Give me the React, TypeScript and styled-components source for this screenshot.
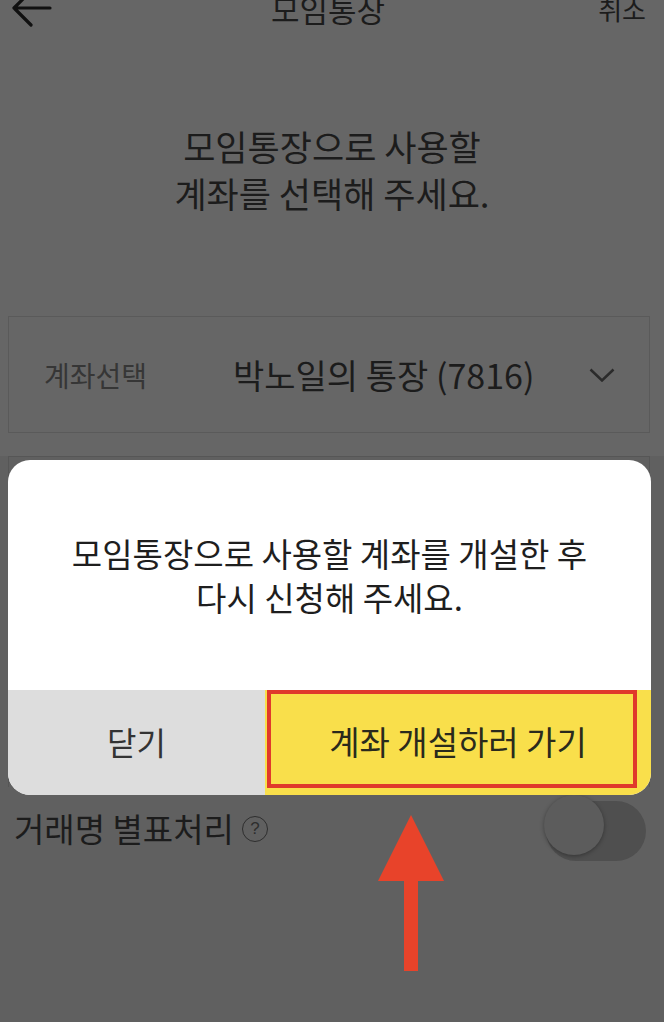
import React from "react";
import styled, { createGlobalStyle } from "styled-components";

const GlobalStyle = createGlobalStyle`
  html, body {
    margin: 0;
    padding: 0;
  }
  body {
    font-family: "Noto Sans CJK KR", "Noto Sans", sans-serif;
    background: #606060;
  }
`;

const Screen = styled.div`
  position: relative;
  width: 664px;
  height: 1022px;
  overflow: hidden;
  background: #666666;
  display: flex;
  flex-direction: column;
`;

const Header = styled.header`
  height: 56px;
  margin-top: -20px;
  display: grid;
  grid-template-columns: 80px 1fr 80px;
  align-items: center;
  padding: 0 18px 0 10px;
  color: #1c1c1c;
`;

const Title = styled.h1`
  margin: 0;
  text-align: center;
  font-size: 31px;
  font-weight: 400;
`;

const HeaderAction = styled.span`
  justify-self: end;
  font-size: 26px;
`;

const Headline = styled.p`
  margin: 86px 0 0;
  text-align: center;
  font-size: 35px;
  line-height: 47px;
  color: #1c1c1c;
`;

const SelectCard = styled.div`
  margin: 100px 14px 0 8px;
  height: 117px;
  box-sizing: border-box;
  border: 1px solid #5a5a5a;
  display: grid;
  grid-template-columns: 189px 1fr auto;
  align-items: center;
  padding: 0 34px 0 35px;
`;

const SelectLabel = styled.span`
  font-size: 28px;
  color: #363636;
`;

const SelectValue = styled.span`
  font-size: 34px;
  color: #1c1c1c;
`;

const Lower = styled.div`
  flex: 1;
  margin-top: 23px;
  background: #606060;
  display: flex;
  flex-direction: column;
`;

const BlankCard = styled.div`
  margin: 0 14px 0 8px;
  height: 330px;
  border: 1px solid #565656;
  border-bottom: none;
`;

const ToggleRow = styled.div`
  margin-top: 9px;
  display: flex;
  align-items: center;
  justify-content: space-between;
  padding: 0 18px 0 14px;
  height: 64px;
`;

const ToggleLabel = styled.span`
  display: flex;
  align-items: center;
  gap: 8px;
  font-size: 33px;
  color: #1c1c1c;
`;

const HelpMark = styled.span`
  width: 24px;
  height: 24px;
  border: 1.5px solid #2e2e2e;
  border-radius: 50%;
  display: inline-flex;
  align-items: center;
  justify-content: center;
  font-family: "Liberation Sans", sans-serif;
  font-size: 17px;
  color: #2e2e2e;
  margin-top: 2px;
`;

const Track = styled.div`
  position: relative;
  width: 100px;
  height: 60px;
  border-radius: 30px;
  background: #4f4f4f;
  margin-top: 6px;
`;

const Knob = styled.div`
  position: absolute;
  left: -2px;
  top: -6px;
  width: 60px;
  height: 60px;
  border-radius: 50%;
  background: #5c5c5c;
  box-shadow: 0 1px 4px rgba(0, 0, 0, 0.35);
`;

const Dialog = styled.div`
  position: absolute;
  top: 460px;
  left: 8px;
  width: 643px;
  height: 335px;
  border-radius: 22px;
  overflow: hidden;
  background: #ffffff;
  display: flex;
  flex-direction: column;
`;

const DialogBody = styled.div`
  flex: 1;
  display: flex;
  align-items: center;
  justify-content: center;
  text-align: center;
  font-size: 33px;
  line-height: 44px;
  color: #1e1e1e;
`;

const DialogButtons = styled.div`
  height: 105px;
  display: grid;
  grid-template-columns: 257px 1fr;
`;

const DialogButton = styled.button<{ primary?: boolean }>`
  position: relative;
  border: none;
  margin: 0;
  padding: 0 0 4px;
  font-family: inherit;
  font-size: ${(p) => (p.primary ? "33px" : "32px")};
  color: ${(p) => (p.primary ? "#2a2a1c" : "#333333")};
  background: ${(p) => (p.primary ? "#f9df4b" : "#dddddd")};
  ${(p) =>
    p.primary &&
    `
    &::after {
      content: "";
      position: absolute;
      top: 0;
      left: 2px;
      right: 14px;
      bottom: 7px;
      border: 4px solid #e0392b;
    }
  `}
`;

const Pointer = styled.svg`
  position: absolute;
  left: 378px;
  top: 815px;
`;

const BackIcon = () => (
  <svg width="42" height="40" viewBox="0 0 42 40" fill="none">
    <path
      d="M40 20H4M21 3L4 20L21 37"
      stroke="#111"
      strokeWidth="3.2"
      strokeLinecap="round"
      strokeLinejoin="round"
    />
  </svg>
);

const Chevron = () => (
  <svg width="26" height="14" viewBox="0 0 26 14" fill="none">
    <path d="M1.5 1.5L13 12.5L24.5 1.5" stroke="#2b2b2b" strokeWidth="2.5" />
  </svg>
);

export default function App() {
  return (
    <>
      <GlobalStyle />
      <Screen>
        <Header>
          <BackIcon />
          <Title>모임통장</Title>
          <HeaderAction>취소</HeaderAction>
        </Header>
        <Headline>
          모임통장으로 사용할
          <br />
          계좌를 선택해 주세요.
        </Headline>
        <SelectCard>
          <SelectLabel>계좌선택</SelectLabel>
          <SelectValue>박노일의 통장 (7816)</SelectValue>
          <Chevron />
        </SelectCard>
        <Lower>
          <BlankCard />
          <ToggleRow>
            <ToggleLabel>
              거래명 별표처리
              <HelpMark>?</HelpMark>
            </ToggleLabel>
            <Track>
              <Knob />
            </Track>
          </ToggleRow>
        </Lower>

        <Dialog>
          <DialogBody>
            모임통장으로 사용할 계좌를 개설한 후
            <br />
            다시 신청해 주세요.
          </DialogBody>
          <DialogButtons>
            <DialogButton>닫기</DialogButton>
            <DialogButton primary>계좌 개설하러 가기</DialogButton>
          </DialogButtons>
        </Dialog>

        <Pointer width="66" height="156" viewBox="0 0 66 156">
          <polygon points="33,0 0,66 66,66" fill="#e8432a" />
          <rect x="26" y="65" width="14" height="91" fill="#e8432a" />
        </Pointer>
      </Screen>
    </>
  );
}
